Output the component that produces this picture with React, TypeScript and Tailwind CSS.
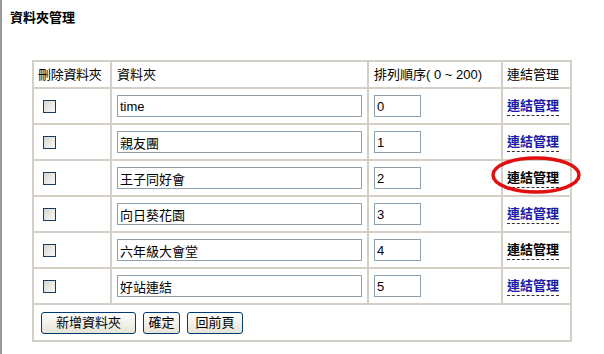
const folders = ["time", "親友團", "王子同好會", "向日葵花園", "六年級大會堂", "好站連結"];
// rows 3 and 5 show the link in black (visited)
const blackLinks = [2, 4];

const cell = "border-2 border-[#d4d0c8] align-middle overflow-visible";

function CheckBox() {
  return (
    <span className="block h-[13px] w-[13px] border border-[#1c3b5a] bg-gradient-to-br from-[#d6d6d0] to-[#fafaf8]" />
  );
}

function XpButton({ label, width }: { label: string; width: string }) {
  return (
    <button
      type="button"
      className={`${width} h-[22px] rounded-[3px] border border-[#003c74] bg-gradient-to-b from-white to-[#e6e3d6] text-[13px] leading-none text-black`}
    >
      {label}
    </button>
  );
}

export default function App() {
  return (
    <div
      className="relative h-[354px] w-[604px] border-l-2 border-[#9a9a9a] bg-white text-black"
      style={{ fontFamily: '"Liberation Sans", "Noto Sans CJK TC", sans-serif' }}
    >
      <h1 className="pl-[8px] pt-[10px] text-[13px] font-bold leading-[16px]">資料夾管理</h1>

      <table className="ml-[30px] mt-[34px] w-[538px] table-fixed border-collapse border-2 border-[#d4d0c8] text-[13px]">
        <colgroup>
          <col className="w-[78px]" />
          <col className="w-[257px]" />
          <col className="w-[134px]" />
          <col className="w-[69px]" />
        </colgroup>
        <thead>
          <tr className="h-[27px] text-left">
            <th className={`${cell} whitespace-nowrap px-[4px] font-normal tracking-[-0.3px]`}>刪除資料夾</th>
            <th className={`${cell} px-[5px] font-normal`}>資料夾</th>
            <th className={`${cell} whitespace-nowrap px-[5px] font-normal`}>排列順序( 0 ~ 200)</th>
            <th className={`${cell} whitespace-nowrap px-[4px] font-normal`}>連結管理</th>
          </tr>
        </thead>
        <tbody>
          {folders.map((name, i) => (
            <tr key={name} className="h-[36px]">
              <td className={`${cell} pl-[9px]`}>
                <CheckBox />
              </td>
              <td className={`${cell} pl-[5px]`}>
                <input
                  readOnly
                  value={name}
                  className="h-[22px] w-[245px] border border-[#8ea0ae] px-[2px] text-[13px] outline-none"
                />
              </td>
              <td className={`${cell} pl-[5px]`}>
                <input
                  readOnly
                  value={String(i)}
                  className="h-[22px] w-[47px] border border-[#8ea0ae] px-[2px] text-[13px] outline-none"
                />
              </td>
              <td className={`${cell} whitespace-nowrap pl-[4px]`}>
                <span
                  className={`inline-block border-b border-dashed border-[#333] pb-[2px] font-bold leading-[14px] ${
                    blackLinks.includes(i) ? "text-black" : "text-[#1a1aa6]"
                  }`}
                >
                  連結管理
                </span>
              </td>
            </tr>
          ))}
          <tr className="h-[37px]">
            <td colSpan={4} className={`${cell} pl-[7px]`}>
              <div className="flex gap-[7px]">
                <XpButton label="新增資料夾" width="w-[95px]" />
                <XpButton label="確定" width="w-[37px]" />
                <XpButton label="回前頁" width="w-[56px]" />
              </div>
            </td>
          </tr>
        </tbody>
      </table>

      {/* red annotation ring around the third row's link */}
      <svg className="absolute left-[488px] top-[155px]" width="94" height="40" viewBox="0 0 94 40">
        <ellipse cx="46" cy="20" rx="43" ry="17" fill="none" stroke="#e01010" strokeWidth="3.5" />
      </svg>
    </div>
  );
}
